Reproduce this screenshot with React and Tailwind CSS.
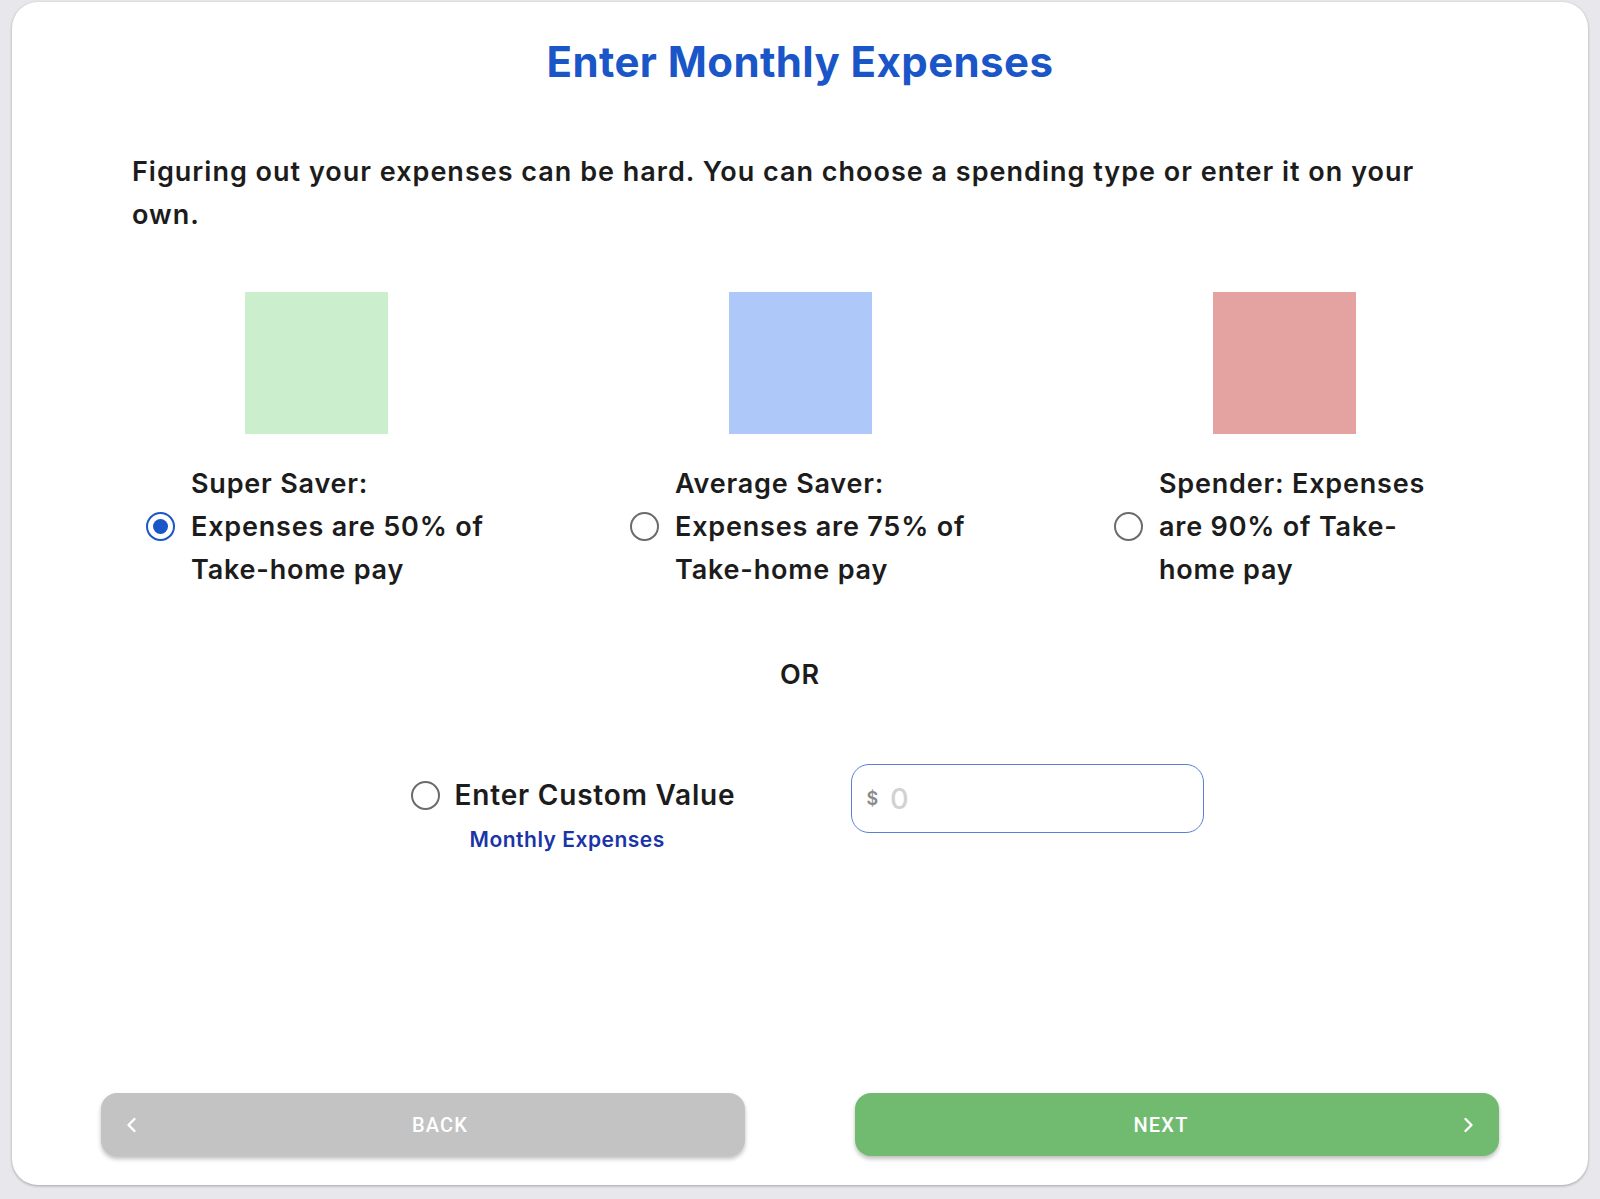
import React, { useState } from 'react';

const options = [
    { id: 'super', color: 'bg-[#cbeecd]', text: 'Super Saver: Expenses are 50% of Take-home pay' },
    { id: 'average', color: 'bg-[#adc8f9]', text: 'Average Saver: Expenses are 75% of Take-home pay' },
    { id: 'spender', color: 'bg-[#e4a3a0]', text: 'Spender: Expenses are 90% of Take-home pay' },
];

const Radio = ({ checked, onClick }) => (
    <button
        onClick={onClick}
        className={`w-[29px] h-[29px] shrink-0 rounded-full border-[2.5px] flex items-center justify-center ${checked ? 'border-[#1a56c8]' : 'border-[#6b6b6b]'}`}
    >
        {checked && <span className="w-[15px] h-[15px] rounded-full bg-[#1a56c8]" />}
    </button>
);

export default function App() {
    const [choice, setChoice] = useState('super');

    return (
        <div className="w-[1600px] h-[1199px] bg-[#e8e8ec] pt-[2px] pl-[12px] font-['Inter','Noto_Sans',sans-serif] text-[#1c1c1c]">
            <div className="w-[1576px] h-[1183px] bg-white rounded-[26px] shadow-[0_1px_3px_rgba(0,0,0,0.3)] flex flex-col">
                {/* Title */}
                <h1 className="mt-[34px] text-center text-[42px] font-bold text-[#1a56c8] tracking-[0.4px] leading-[52px]">
                    Enter Monthly Expenses
                </h1>

                <p className="mt-[62px] pl-[120px] pr-[130px] text-[27px] font-semibold leading-[43px] tracking-[1px]">
                    Figuring out your expenses can be hard. You can choose a spending type or enter it on your own.
                </p>

                {/* Spending types */}
                <div className="mt-[56px] grid grid-cols-[484px_484px_484px] justify-center">
                    {options.map(o => (
                        <div key={o.id} className="flex flex-col items-center">
                            <div className={`w-[143px] h-[142px] ${o.color}`} />
                            <div className="mt-[28px] w-[340px] flex items-center gap-[16px]">
                                <Radio checked={choice === o.id} onClick={() => setChoice(o.id)} />
                                <span className="w-[295px] text-[27px] font-semibold leading-[43px] tracking-[0.8px]">{o.text}</span>
                            </div>
                        </div>
                    ))}
                </div>

                <div className="mt-[62px] text-center text-[27px] font-semibold leading-[43px] tracking-[0.8px]">OR</div>

                {/* Custom value */}
                <div className="mt-[68px] flex justify-center items-start gap-[116px] pl-[15px]">
                    <div className="flex flex-col items-start pt-[11px]">
                        <div className="flex items-center gap-[15px]">
                            <Radio checked={choice === 'custom'} onClick={() => setChoice('custom')} />
                            <span className="text-[28px] font-semibold leading-[40px] tracking-[0.8px]">Enter Custom Value</span>
                        </div>
                        <span className="mt-[11px] ml-[59px] text-[21px] leading-[28px] font-semibold text-[#1a34a8] tracking-[0.5px]">Monthly Expenses</span>
                    </div>
                    <div className="w-[353px] h-[69px] rounded-[18px] border-[1.5px] border-[#5a7fd6] flex items-center pl-[14px] gap-[12px]">
                        <span className="text-[18px] font-semibold text-[#8a8a8a]">$</span>
                        <input
                            placeholder="0"
                            className="flex-1 min-w-0 text-[29px] font-medium outline-none placeholder:text-[#d2d2d2] bg-transparent"
                        />
                    </div>
                </div>

                {/* Footer buttons */}
                <div className="mt-auto mb-[29px] flex justify-between px-[89px] font-['Roboto',sans-serif]">
                    <button className="w-[644px] h-[63px] rounded-[16px] bg-[#c3c3c3] shadow-[0_3px_4px_rgba(0,0,0,0.25)] flex items-center px-[19px] text-white">
                        <svg className="w-[24px] h-[24px]" viewBox="0 0 24 24" fill="none" stroke="currentColor" strokeWidth={2.4} strokeLinecap="round" strokeLinejoin="round">
                            <path d="M14.5 6l-6 6 6 6" />
                        </svg>
                        <span className="flex-1 text-center text-[20px] font-medium tracking-[1.2px] pl-[10px]">BACK</span>
                    </button>
                    <button className="w-[644px] h-[63px] rounded-[16px] bg-[#70bb6f] shadow-[0_3px_4px_rgba(0,0,0,0.25)] flex items-center px-[19px] text-white">
                        <span className="flex-1 text-center text-[20px] font-medium tracking-[1.2px] pr-[8px]">NEXT</span>
                        <svg className="w-[24px] h-[24px]" viewBox="0 0 24 24" fill="none" stroke="currentColor" strokeWidth={2.4} strokeLinecap="round" strokeLinejoin="round">
                            <path d="M9.5 6l6 6-6 6" />
                        </svg>
                    </button>
                </div>
            </div>
        </div>
    );
}
